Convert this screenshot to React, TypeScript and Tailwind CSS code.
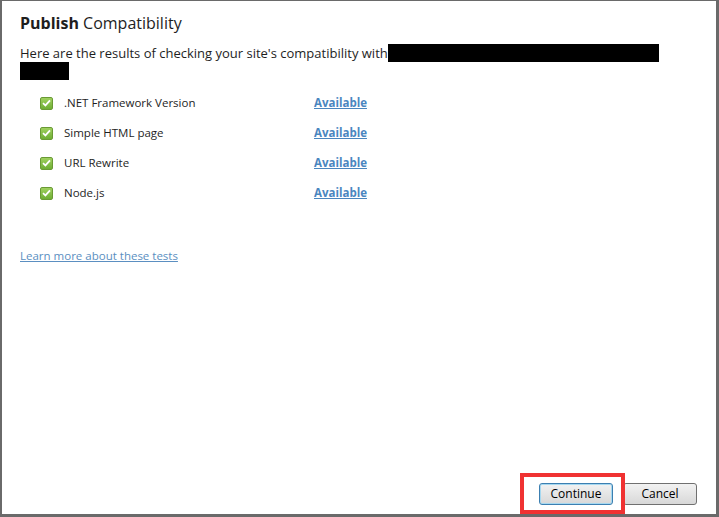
// Publish Compatibility dialog — lists the checks run against the target site,
// with a highlighted Continue button (annotation box drawn over it).

const CHECKS = [
  ".NET Framework Version",
  "Simple HTML page",
  "URL Rewrite",
  "Node.js",
];

function CheckBox() {
  return (
    <span className="flex h-[13px] w-[13px] items-center justify-center rounded-[2px] border border-[#6a9a35] bg-gradient-to-b from-[#9fd05e] to-[#6fae34]">
      <svg width="9" height="8" viewBox="0 0 9 8">
        <path d="M1 4.2 L3.4 6.4 L8 1.4" fill="none" stroke="#ffffff" strokeWidth="1.8" />
      </svg>
    </span>
  );
}

function DialogButton({ label, primary }: { label: string; primary?: boolean }) {
  return (
    <button
      className={
        "h-[22px] w-[74px] rounded-[3px] border bg-gradient-to-b from-[#f2f2f2] to-[#d8d8d8] text-[12px] text-black " +
        (primary ? "border-[#3c7fb1] shadow-[inset_0_0_0_1px_#a6d8f0]" : "border-[#707070]")
      }
    >
      {label}
    </button>
  );
}

export default function App() {
  return (
    <div
      className="relative flex h-[517px] w-[719px] flex-col border-b-[3px] border-l-2 border-r-[3px] border-t border-[#6a6a6a] bg-white text-[#1e1e1e]"
      style={{ fontFamily: '"Open Sans", "Noto Sans", sans-serif' }}
    >
      <div className="flex flex-1 flex-col pl-[18px] pr-[50px] pt-[11px]">
        <h1 className="text-[16px] leading-[22px]">
          <span className="font-bold">Publish</span> Compatibility
        </h1>

        <p className="mt-[6px] text-[13px] leading-[18px]">
          Here are the results of checking your site's compatibility with
          <span className="inline-block h-[18px] w-[271px] translate-y-[4px] bg-black align-baseline" />
          <br />
          <span className="inline-block h-[18px] w-[49px] bg-black align-top" />
        </p>

        <ul className="mt-[8px] flex flex-col pl-[20px] text-[11.5px]">
          {CHECKS.map((name) => (
            <li key={name} className="flex h-[30px] items-center">
              <CheckBox />
              <span className="ml-[11px] w-[250px]">{name}</span>
              <a className="font-bold text-[#4a86bf] underline">Available</a>
            </li>
          ))}
        </ul>

        <a className="mt-[39px] self-start text-[11.5px] text-[#5b8fc1] underline">
          Learn more about these tests
        </a>
      </div>

      <div className="flex justify-end gap-[10px] pb-[9px] pr-[19px]">
        <DialogButton label="Continue" primary />
        <DialogButton label="Cancel" />
      </div>

      {/* annotation box around the Continue button */}
      <div className="pointer-events-none absolute left-[518px] top-[472px] h-[41px] w-[105px] border-4 border-[#f03232]" />
    </div>
  );
}
